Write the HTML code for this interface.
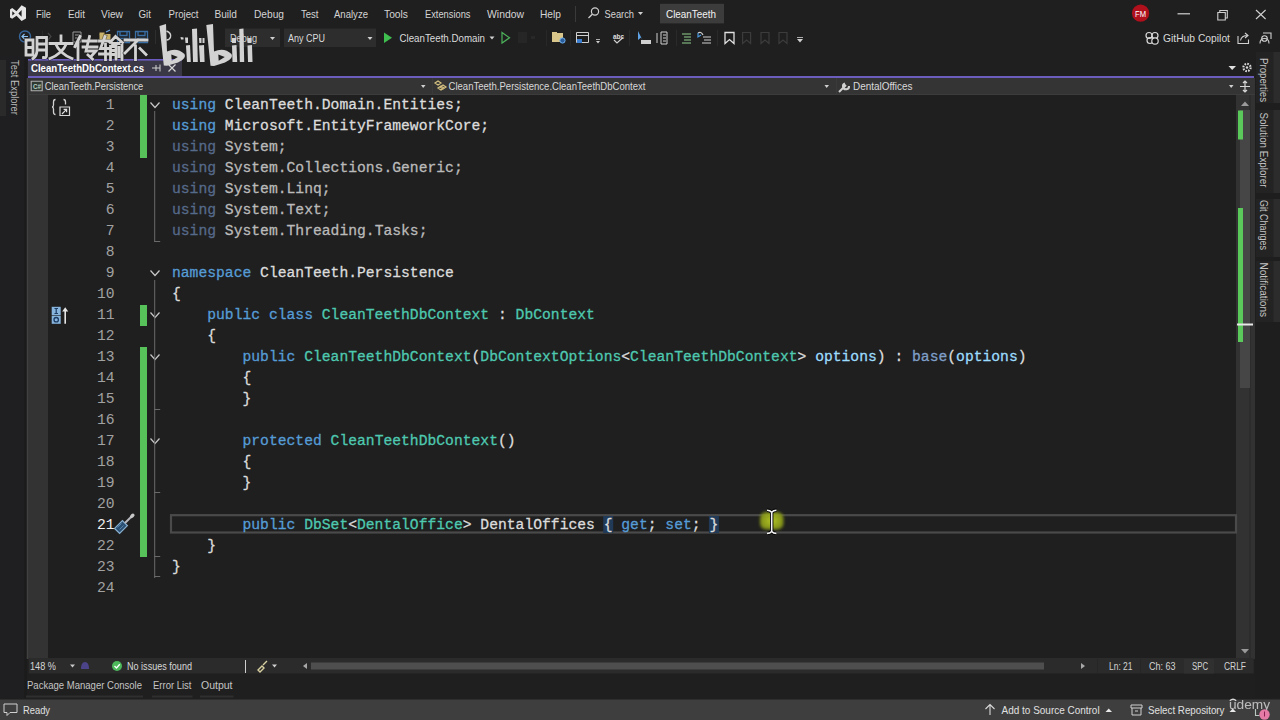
<!DOCTYPE html><html><head><meta charset="utf-8"><style>html,body{margin:0;padding:0;width:1280px;height:720px;overflow:hidden;background:#1f1f1f}</style></head><body><svg width="1280" height="720" viewBox="0 0 1280 720" style="display:block"><rect x="0" y="0" width="1280" height="720" fill="#1f1f1f" /><text x="36" y="17.8" font-family="Liberation Sans" font-size="11" fill="#d4d4d4" font-weight="400" text-anchor="start" textLength="15" lengthAdjust="spacingAndGlyphs" >File</text><text x="68" y="17.8" font-family="Liberation Sans" font-size="11" fill="#d4d4d4" font-weight="400" text-anchor="start" textLength="17" lengthAdjust="spacingAndGlyphs" >Edit</text><text x="101" y="17.8" font-family="Liberation Sans" font-size="11" fill="#d4d4d4" font-weight="400" text-anchor="start" textLength="22" lengthAdjust="spacingAndGlyphs" >View</text><text x="138.5" y="17.8" font-family="Liberation Sans" font-size="11" fill="#d4d4d4" font-weight="400" text-anchor="start" textLength="12.5" lengthAdjust="spacingAndGlyphs" >Git</text><text x="168.5" y="17.8" font-family="Liberation Sans" font-size="11" fill="#d4d4d4" font-weight="400" text-anchor="start" textLength="30" lengthAdjust="spacingAndGlyphs" >Project</text><text x="214.5" y="17.8" font-family="Liberation Sans" font-size="11" fill="#d4d4d4" font-weight="400" text-anchor="start" textLength="22.5" lengthAdjust="spacingAndGlyphs" >Build</text><text x="254" y="17.8" font-family="Liberation Sans" font-size="11" fill="#d4d4d4" font-weight="400" text-anchor="start" textLength="30" lengthAdjust="spacingAndGlyphs" >Debug</text><text x="301" y="17.8" font-family="Liberation Sans" font-size="11" fill="#d4d4d4" font-weight="400" text-anchor="start" textLength="17.5" lengthAdjust="spacingAndGlyphs" >Test</text><text x="334" y="17.8" font-family="Liberation Sans" font-size="11" fill="#d4d4d4" font-weight="400" text-anchor="start" textLength="34" lengthAdjust="spacingAndGlyphs" >Analyze</text><text x="384" y="17.8" font-family="Liberation Sans" font-size="11" fill="#d4d4d4" font-weight="400" text-anchor="start" textLength="24" lengthAdjust="spacingAndGlyphs" >Tools</text><text x="425" y="17.8" font-family="Liberation Sans" font-size="11" fill="#d4d4d4" font-weight="400" text-anchor="start" textLength="45.5" lengthAdjust="spacingAndGlyphs" >Extensions</text><text x="487" y="17.8" font-family="Liberation Sans" font-size="11" fill="#d4d4d4" font-weight="400" text-anchor="start" textLength="37" lengthAdjust="spacingAndGlyphs" >Window</text><text x="540" y="17.8" font-family="Liberation Sans" font-size="11" fill="#d4d4d4" font-weight="400" text-anchor="start" textLength="21" lengthAdjust="spacingAndGlyphs" >Help</text><path d="M10 9.5 L12.2 8 L16.5 11.2 L21.6 5.3 L26 7.8 V18.6 L21.6 21 L16.5 15.8 L12.2 18.8 L10 17.4 Z M12.3 11.3 L14.8 13.4 L12.3 15.5 Z M21.6 10 V16.8 L18.4 13.4 Z" stroke="none" fill="#e6e6e6" stroke-width="1" fill-rule="evenodd"/><rect x="575" y="6" width="1" height="16" fill="#3a3a3a" /><circle cx="595" cy="11.5" r="3.6" stroke="#d0d0d0" stroke-width="1.2" fill="none"/><path d="M592.3 14.3 L588.5 18" stroke="#d0d0d0" fill="none" stroke-width="1.3" /><text x="604.5" y="17.8" font-family="Liberation Sans" font-size="11" fill="#d4d4d4" font-weight="400" text-anchor="start" textLength="29.5" lengthAdjust="spacingAndGlyphs" >Search</text><path d="M638 12 L643 12 L640.5 15 Z" stroke="none" fill="#d0d0d0" stroke-width="1" /><rect x="660" y="3.8" width="64" height="19.6" fill="#3c3c3c" /><text x="666" y="17.8" font-family="Liberation Sans" font-size="11" fill="#f2f2f2" font-weight="400" text-anchor="start" textLength="50" lengthAdjust="spacingAndGlyphs" >CleanTeeth</text><circle cx="1140.6" cy="13.2" r="8.6" fill="#b0101c"/><text x="1140.6" y="16.6" font-family="Liberation Sans" font-size="8.5" fill="#ffffff" font-weight="400" text-anchor="middle" textLength="11" lengthAdjust="spacingAndGlyphs" >FM</text><rect x="1177.5" y="13.2" width="12.5" height="1.2" fill="#d0d0d0" /><path d="M1217.8 12.5 h7.5 v7.5 h-7.5 Z M1219.8 12.5 v-2 h7.5 v7.5 h-2" stroke="#d0d0d0" fill="none" stroke-width="1.1" /><path d="M1256 10 L1265.6 19 M1265.6 10 L1256 19" stroke="#d0d0d0" fill="none" stroke-width="1.1" /><rect x="225" y="28.5" width="55" height="18.5" fill="#2d2d2d" /><text x="230" y="41.5" font-family="Liberation Sans" font-size="11" fill="#cfcfcf" font-weight="400" text-anchor="start" textLength="27" lengthAdjust="spacingAndGlyphs" >Debug</text><path d="M270 37 L275 37 L272.5 40 Z" stroke="none" fill="#d0d0d0" stroke-width="1" /><rect x="284" y="28.5" width="92" height="18.5" fill="#2d2d2d" /><text x="288" y="41.5" font-family="Liberation Sans" font-size="11" fill="#dcdcdc" font-weight="400" text-anchor="start" textLength="37" lengthAdjust="spacingAndGlyphs" >Any CPU</text><path d="M367.5 37 L372.5 37 L370 40 Z" stroke="none" fill="#d0d0d0" stroke-width="1" /><path d="M384 32.5 L392 37.8 L384 43 Z" stroke="none" fill="#3fbf4f" stroke-width="1" /><text x="399.5" y="42" font-family="Liberation Sans" font-size="11" fill="#dadada" font-weight="400" text-anchor="start" textLength="85.5" lengthAdjust="spacingAndGlyphs" >CleanTeeth.Domain</text><path d="M489.5 36.5 L494.5 36.5 L492 39.5 Z" stroke="none" fill="#d0d0d0" stroke-width="1" /><path d="M502 32.5 L509.5 37.8 L502 43 Z" stroke="#4db35a" fill="none" stroke-width="1.2" /><rect x="518" y="32" width="9" height="11" fill="#262626" /><rect x="531" y="36" width="4" height="3" fill="#282828" /><rect x="546" y="30" width="1" height="16" fill="#282828" /><rect x="552" y="33" width="11" height="9" fill="#d8c68a" /><rect x="552" y="32" width="5" height="2" fill="#d8c68a" /><circle cx="562.5" cy="40.5" r="2.6" fill="#2a5d9a" stroke="#6fb0f0" stroke-width="1"/><rect x="570" y="30" width="1" height="16" fill="#282828" /><path d="M576.5 32.5 h12 v10 h-12 Z M576.5 35.5 h12" stroke="#cfcfcf" fill="none" stroke-width="1" /><rect x="577" y="39" width="5" height="4" fill="#3d7fd0" /><path d="M596 41 L600 41 L598 43.5 Z" stroke="none" fill="#d0d0d0" stroke-width="1" /><rect x="596" y="39" width="4" height="0.8" fill="#d0d0d0" /><text x="613" y="38.5" font-family="Liberation Sans" font-size="7.5" fill="#e0e0e0" font-weight="700" text-anchor="start" textLength="11" lengthAdjust="spacingAndGlyphs" >abc</text><path d="M614 40 L617 43 L623 37.5" stroke="#d0d0d0" fill="none" stroke-width="1.2" /><rect x="629" y="30" width="1" height="16" fill="#2a2a2a" /><path d="M638 31 L638 40 L641 37.5 L643 41 Z" stroke="none" fill="#5fa3e6" stroke-width="1" /><rect x="641" y="40" width="10" height="4" fill="#d0d0d0" /><path d="M657 33 v10 M661 32 h6 v12 h-6 Z M663 35 h3 M663 38 h3 M663 41 h3" stroke="#d0d0d0" fill="none" stroke-width="1" /><rect x="676" y="30" width="1" height="16" fill="#2a2a2a" /><path d="M682 34 h9 M684 37 h7 M684 40 h7 M682 43 h9" stroke="#8fcf8f" fill="none" stroke-width="1.2" /><path d="M698 33 q3 -2 5 2 M703 37 h8 M704 40 h7 M702 43 h9" stroke="#cfcfcf" fill="none" stroke-width="1.2" /><path d="M698 33 l0 4 l3 -2" stroke="#4a9ae0" fill="none" stroke-width="1.2" /><rect x="717" y="30" width="1" height="16" fill="#2a2a2a" /><path d="M725 32.5 v11 l4.5 -4 l4.5 4 v-11 Z" stroke="#e0e0e0" fill="none" stroke-width="1.3" /><path d="M742.6 32.5 v11 l4 -3.5 l4 3.5 v-11 Z" stroke="#3c3c3c" fill="none" stroke-width="1.2" /><path d="M761 32.5 v11 l4 -3.5 l4 3.5 v-11 Z" stroke="#3c3c3c" fill="none" stroke-width="1.2" /><path d="M779 32.5 v11 l4 -3.5 l4 3.5 v-11 Z" stroke="#3c3c3c" fill="none" stroke-width="1.2" /><path d="M797 39 L803 39 L800 42.5 Z" stroke="none" fill="#cfcfcf" stroke-width="1" /><rect x="797" y="37" width="6" height="0.8" fill="#cfcfcf" /><g stroke="#d8d8d8" stroke-width="1.2" fill="none"><circle cx="1149" cy="35.5" r="3"/><circle cx="1155" cy="35.5" r="3"/><circle cx="1150" cy="40.5" r="3"/></g><circle cx="1155" cy="41" r="3.2" fill="#111" stroke="#d8d8d8" stroke-width="1.2"/><text x="1163" y="42" font-family="Liberation Sans" font-size="11" fill="#d8d8d8" font-weight="400" text-anchor="start" textLength="67" lengthAdjust="spacingAndGlyphs" >GitHub Copilot</text><path d="M1238 36 v7.5 h10.5 v-4 M1240.5 40.5 q1 -5 7 -5 M1245 33 l3 2.5 l-3 2.5" stroke="#d0d0d0" fill="none" stroke-width="1.1" /><path d="M1260 43.5 q0 -5 4.5 -5 q4.5 0 4.5 5 M1264.5 38.5 m-2.8 0 a2.8 2.8 0 1 0 5.6 0 a2.8 2.8 0 1 0 -5.6 0 M1263 33 h8 v6" stroke="#d0d0d0" fill="none" stroke-width="1.1" /><rect x="0" y="55" width="24.5" height="643" fill="#1f1f21" /><rect x="24.5" y="55" width="2.2" height="643" fill="#1b1b1b" /><rect x="26.7" y="78" width="2" height="581" fill="#414141" /><rect x="1255" y="55" width="25" height="643" fill="#1e1e1e" /><rect x="1256" y="52" width="24" height="51" fill="#232323" /><rect x="1273.5" y="52" width="6.5" height="51" fill="#2c2c2c" /><rect x="1256" y="110" width="24" height="83" fill="#232323" /><rect x="1273.5" y="110" width="6.5" height="83" fill="#2c2c2c" /><rect x="1256" y="199" width="24" height="58" fill="#232323" /><rect x="1273.5" y="199" width="6.5" height="58" fill="#2c2c2c" /><rect x="1256" y="261" width="24" height="61" fill="#232323" /><rect x="1273.5" y="261" width="6.5" height="61" fill="#2c2c2c" /><rect x="0" y="60" width="6" height="56" fill="#2a2a2a" /><text transform="translate(10.5,60) rotate(90)" font-family="Liberation Sans" font-size="11" fill="#bdbdbd" textLength="55" lengthAdjust="spacingAndGlyphs">Test Explorer</text><text transform="translate(1260,58) rotate(90)" font-family="Liberation Sans" font-size="11" fill="#c4c4c4" textLength="44" lengthAdjust="spacingAndGlyphs">Properties</text><text transform="translate(1260,112.5) rotate(90)" font-family="Liberation Sans" font-size="11" fill="#c4c4c4" textLength="75" lengthAdjust="spacingAndGlyphs">Solution Explorer</text><text transform="translate(1260,200) rotate(90)" font-family="Liberation Sans" font-size="11" fill="#c4c4c4" textLength="50" lengthAdjust="spacingAndGlyphs">Git Changes</text><text transform="translate(1260,262.5) rotate(90)" font-family="Liberation Sans" font-size="11" fill="#c4c4c4" textLength="54.5" lengthAdjust="spacingAndGlyphs">Notifications</text><rect x="28" y="59" width="154" height="17" fill="#3a3846" /><rect x="28" y="59" width="154" height="1.6" fill="#6a5cc0" /><text x="31" y="72" font-family="Liberation Sans" font-size="11" fill="#ffffff" font-weight="700" text-anchor="start" textLength="113" lengthAdjust="spacingAndGlyphs" >CleanTeethDbContext.cs</text><path d="M152 68 h8 M156 65 v6 M160 64.5 v7" stroke="#d0d0d0" fill="none" stroke-width="1" /><path d="M168.5 64.5 L175.5 71.5 M175.5 64.5 L168.5 71.5" stroke="#d8d8d8" fill="none" stroke-width="1.2" /><rect x="28" y="76" width="1226" height="2" fill="#6a5dbc" /><path d="M1228.5 66 L1236 66 L1232.2 70 Z" stroke="none" fill="#e0e0e0" stroke-width="1" /><circle cx="1247" cy="67.5" r="3.6" fill="none" stroke="#d8d8d8" stroke-width="2.2" stroke-dasharray="1.6 1.2"/><circle cx="1247" cy="67.5" r="1.2" fill="#d8d8d8"/><rect x="28.7" y="78" width="1226.3" height="17" fill="#343434" /><rect x="28.7" y="94" width="1226.3" height="1" fill="#3c3c3c" /><rect x="432" y="78" width="1" height="17" fill="#3a3a3a" /><rect x="836" y="78" width="1" height="17" fill="#3a3a3a" /><path d="M31.2 81.2 h11 v9.6 h-11 Z" stroke="#b0b0b0" fill="#2f3a33" stroke-width="1.1" /><text x="33" y="89.3" font-family="Liberation Sans" font-size="7" fill="#b8d0c0" font-weight="700" text-anchor="start" textLength="8" lengthAdjust="spacingAndGlyphs" >C#</text><text x="44.8" y="90.2" font-family="Liberation Sans" font-size="11" fill="#d8d8d8" font-weight="400" text-anchor="start" textLength="98.5" lengthAdjust="spacingAndGlyphs" >CleanTeeth.Persistence</text><path d="M421 85 L425.5 85 L423.2 88 Z" stroke="none" fill="#d0d0d0" stroke-width="1" /><path d="M435 83 l3 -2 l3 2 l-3 2 Z M440 87 l3 -2 l3 2 l-3 2 Z M438 88 l3 -2 l3 2 l-3 2 Z" stroke="#d4c080" fill="none" stroke-width="1.2" /><text x="448.5" y="90.2" font-family="Liberation Sans" font-size="11" fill="#d8d8d8" font-weight="400" text-anchor="start" textLength="197" lengthAdjust="spacingAndGlyphs" >CleanTeeth.Persistence.CleanTeethDbContext</text><path d="M824.5 85 L829 85 L826.7 88 Z" stroke="none" fill="#d0d0d0" stroke-width="1" /><path d="M839 92 L846 85 M845 83.5 a3 3 0 1 0 4 2.5" stroke="#d0d0d0" fill="none" stroke-width="2" /><text x="853" y="90.2" font-family="Liberation Sans" font-size="11" fill="#dadada" font-weight="400" text-anchor="start" textLength="59.5" lengthAdjust="spacingAndGlyphs" >DentalOffices</text><path d="M1229 85 L1233.5 85 L1231.2 88 Z" stroke="none" fill="#d0d0d0" stroke-width="1" /><path d="M1240 86.5 h10 M1245 81 v11 M1243 83 l2 -2 l2 2 M1243 90 l2 2 l2 -2" stroke="#d8d8d8" fill="none" stroke-width="1.2" /><rect x="28.7" y="95" width="19.3" height="564" fill="#333333" /><rect x="48" y="95" width="1188" height="564" fill="#1f1f1f" /><rect x="1236" y="95" width="19" height="564" fill="#323232" /><rect x="1249.4" y="95" width="1.2" height="564" fill="#2a2a2a" /><rect x="1240" y="110" width="10" height="278" fill="#464646" /><path d="M1241 106 L1249 106 L1245 101.5 Z" stroke="none" fill="#9a9a9a" stroke-width="1" /><path d="M1241 649 L1249 649 L1245 653.5 Z" stroke="none" fill="#9a9a9a" stroke-width="1" /><rect x="1238" y="110.5" width="5" height="29" fill="#5bc85b" /><rect x="1238" y="208" width="5" height="134" fill="#5bc85b" /><rect x="1237" y="323.5" width="16" height="2" fill="#e8e8e8" /><rect x="140" y="95" width="7" height="63" fill="#57c25a" /><rect x="140" y="305" width="7" height="21" fill="#57c25a" /><rect x="140" y="347" width="7" height="210" fill="#57c25a" /><text x="114.5" y="109.3" font-family="Liberation Mono" font-size="15.5" fill="#a2a2a2" font-weight="400" text-anchor="end" textLength="8.81" lengthAdjust="spacingAndGlyphs" >1</text><text x="114.5" y="130.3" font-family="Liberation Mono" font-size="15.5" fill="#a2a2a2" font-weight="400" text-anchor="end" textLength="8.81" lengthAdjust="spacingAndGlyphs" >2</text><text x="114.5" y="151.3" font-family="Liberation Mono" font-size="15.5" fill="#a2a2a2" font-weight="400" text-anchor="end" textLength="8.81" lengthAdjust="spacingAndGlyphs" >3</text><text x="114.5" y="172.3" font-family="Liberation Mono" font-size="15.5" fill="#a2a2a2" font-weight="400" text-anchor="end" textLength="8.81" lengthAdjust="spacingAndGlyphs" >4</text><text x="114.5" y="193.3" font-family="Liberation Mono" font-size="15.5" fill="#a2a2a2" font-weight="400" text-anchor="end" textLength="8.81" lengthAdjust="spacingAndGlyphs" >5</text><text x="114.5" y="214.3" font-family="Liberation Mono" font-size="15.5" fill="#a2a2a2" font-weight="400" text-anchor="end" textLength="8.81" lengthAdjust="spacingAndGlyphs" >6</text><text x="114.5" y="235.3" font-family="Liberation Mono" font-size="15.5" fill="#a2a2a2" font-weight="400" text-anchor="end" textLength="8.81" lengthAdjust="spacingAndGlyphs" >7</text><text x="114.5" y="256.3" font-family="Liberation Mono" font-size="15.5" fill="#a2a2a2" font-weight="400" text-anchor="end" textLength="8.81" lengthAdjust="spacingAndGlyphs" >8</text><text x="114.5" y="277.3" font-family="Liberation Mono" font-size="15.5" fill="#a2a2a2" font-weight="400" text-anchor="end" textLength="8.81" lengthAdjust="spacingAndGlyphs" >9</text><text x="114.5" y="298.3" font-family="Liberation Mono" font-size="15.5" fill="#a2a2a2" font-weight="400" text-anchor="end" textLength="17.62" lengthAdjust="spacingAndGlyphs" >10</text><text x="114.5" y="319.3" font-family="Liberation Mono" font-size="15.5" fill="#a2a2a2" font-weight="400" text-anchor="end" textLength="17.62" lengthAdjust="spacingAndGlyphs" >11</text><text x="114.5" y="340.3" font-family="Liberation Mono" font-size="15.5" fill="#a2a2a2" font-weight="400" text-anchor="end" textLength="17.62" lengthAdjust="spacingAndGlyphs" >12</text><text x="114.5" y="361.3" font-family="Liberation Mono" font-size="15.5" fill="#a2a2a2" font-weight="400" text-anchor="end" textLength="17.62" lengthAdjust="spacingAndGlyphs" >13</text><text x="114.5" y="382.3" font-family="Liberation Mono" font-size="15.5" fill="#a2a2a2" font-weight="400" text-anchor="end" textLength="17.62" lengthAdjust="spacingAndGlyphs" >14</text><text x="114.5" y="403.3" font-family="Liberation Mono" font-size="15.5" fill="#a2a2a2" font-weight="400" text-anchor="end" textLength="17.62" lengthAdjust="spacingAndGlyphs" >15</text><text x="114.5" y="424.3" font-family="Liberation Mono" font-size="15.5" fill="#a2a2a2" font-weight="400" text-anchor="end" textLength="17.62" lengthAdjust="spacingAndGlyphs" >16</text><text x="114.5" y="445.3" font-family="Liberation Mono" font-size="15.5" fill="#a2a2a2" font-weight="400" text-anchor="end" textLength="17.62" lengthAdjust="spacingAndGlyphs" >17</text><text x="114.5" y="466.3" font-family="Liberation Mono" font-size="15.5" fill="#a2a2a2" font-weight="400" text-anchor="end" textLength="17.62" lengthAdjust="spacingAndGlyphs" >18</text><text x="114.5" y="487.3" font-family="Liberation Mono" font-size="15.5" fill="#a2a2a2" font-weight="400" text-anchor="end" textLength="17.62" lengthAdjust="spacingAndGlyphs" >19</text><text x="114.5" y="508.3" font-family="Liberation Mono" font-size="15.5" fill="#a2a2a2" font-weight="400" text-anchor="end" textLength="17.62" lengthAdjust="spacingAndGlyphs" >20</text><text x="114.5" y="529.3" font-family="Liberation Mono" font-size="15.5" fill="#f0f0f0" font-weight="400" text-anchor="end" textLength="17.62" lengthAdjust="spacingAndGlyphs" >21</text><text x="114.5" y="550.3" font-family="Liberation Mono" font-size="15.5" fill="#a2a2a2" font-weight="400" text-anchor="end" textLength="17.62" lengthAdjust="spacingAndGlyphs" >22</text><text x="114.5" y="571.3" font-family="Liberation Mono" font-size="15.5" fill="#a2a2a2" font-weight="400" text-anchor="end" textLength="17.62" lengthAdjust="spacingAndGlyphs" >23</text><text x="114.5" y="592.3" font-family="Liberation Mono" font-size="15.5" fill="#a2a2a2" font-weight="400" text-anchor="end" textLength="17.62" lengthAdjust="spacingAndGlyphs" >24</text><path d="M150.5 102.5 L155 107.5 L159.5 102.5" stroke="#c8c8c8" fill="none" stroke-width="1.2" /><path d="M150.5 270.5 L155 275.5 L159.5 270.5" stroke="#c8c8c8" fill="none" stroke-width="1.2" /><path d="M150.5 312.5 L155 317.5 L159.5 312.5" stroke="#c8c8c8" fill="none" stroke-width="1.2" /><path d="M150.5 354.5 L155 359.5 L159.5 354.5" stroke="#c8c8c8" fill="none" stroke-width="1.2" /><path d="M150.5 438.5 L155 443.5 L159.5 438.5" stroke="#c8c8c8" fill="none" stroke-width="1.2" /><rect x="154.2" y="111" width="1" height="131" fill="#6a6a6a" /><rect x="154.2" y="241" width="6" height="1" fill="#6a6a6a" /><rect x="154.2" y="280" width="1" height="298" fill="#6a6a6a" /><rect x="154.2" y="576" width="6" height="1" fill="#6a6a6a" /><rect x="154.2" y="556" width="6" height="1" fill="#6a6a6a" /><rect x="154.2" y="492" width="6" height="1" fill="#6a6a6a" /><rect x="154.2" y="409" width="6" height="1" fill="#6a6a6a" /><rect x="171" y="515.2" width="1065" height="17.3" fill="none" stroke="#4a4a4a" stroke-width="2.2"/><rect x="603.19" y="516" width="10" height="17" fill="#213a58" /><rect x="708.91" y="516" width="10" height="17" fill="#213a58" /><text x="172.0" y="109.3" font-family="Liberation Mono" font-size="15.5" fill="#569cd6" font-weight="400" text-anchor="start" textLength="44.05" lengthAdjust="spacingAndGlyphs" stroke="#569cd6" stroke-width="0.3">using</text><text x="224.86" y="109.3" font-family="Liberation Mono" font-size="15.5" fill="#dcdcdc" font-weight="400" text-anchor="start" textLength="237.87" lengthAdjust="spacingAndGlyphs" stroke="#dcdcdc" stroke-width="0.3">CleanTeeth.Domain.Entities;</text><text x="172.0" y="130.3" font-family="Liberation Mono" font-size="15.5" fill="#569cd6" font-weight="400" text-anchor="start" textLength="44.05" lengthAdjust="spacingAndGlyphs" stroke="#569cd6" stroke-width="0.3">using</text><text x="224.86" y="130.3" font-family="Liberation Mono" font-size="15.5" fill="#dcdcdc" font-weight="400" text-anchor="start" textLength="264.3" lengthAdjust="spacingAndGlyphs" stroke="#dcdcdc" stroke-width="0.3">Microsoft.EntityFrameworkCore;</text><text x="172.0" y="151.3" font-family="Liberation Mono" font-size="15.5" fill="#566a8a" font-weight="400" text-anchor="start" textLength="44.05" lengthAdjust="spacingAndGlyphs" stroke="#566a8a" stroke-width="0.3">using</text><text x="224.86" y="151.3" font-family="Liberation Mono" font-size="15.5" fill="#bababa" font-weight="400" text-anchor="start" textLength="61.67" lengthAdjust="spacingAndGlyphs" stroke="#bababa" stroke-width="0.3">System;</text><text x="172.0" y="172.3" font-family="Liberation Mono" font-size="15.5" fill="#566a8a" font-weight="400" text-anchor="start" textLength="44.05" lengthAdjust="spacingAndGlyphs" stroke="#566a8a" stroke-width="0.3">using</text><text x="224.86" y="172.3" font-family="Liberation Mono" font-size="15.5" fill="#bababa" font-weight="400" text-anchor="start" textLength="237.87" lengthAdjust="spacingAndGlyphs" stroke="#bababa" stroke-width="0.3">System.Collections.Generic;</text><text x="172.0" y="193.3" font-family="Liberation Mono" font-size="15.5" fill="#566a8a" font-weight="400" text-anchor="start" textLength="44.05" lengthAdjust="spacingAndGlyphs" stroke="#566a8a" stroke-width="0.3">using</text><text x="224.86" y="193.3" font-family="Liberation Mono" font-size="15.5" fill="#bababa" font-weight="400" text-anchor="start" textLength="105.72" lengthAdjust="spacingAndGlyphs" stroke="#bababa" stroke-width="0.3">System.Linq;</text><text x="172.0" y="214.3" font-family="Liberation Mono" font-size="15.5" fill="#566a8a" font-weight="400" text-anchor="start" textLength="44.05" lengthAdjust="spacingAndGlyphs" stroke="#566a8a" stroke-width="0.3">using</text><text x="224.86" y="214.3" font-family="Liberation Mono" font-size="15.5" fill="#bababa" font-weight="400" text-anchor="start" textLength="105.72" lengthAdjust="spacingAndGlyphs" stroke="#bababa" stroke-width="0.3">System.Text;</text><text x="172.0" y="235.3" font-family="Liberation Mono" font-size="15.5" fill="#566a8a" font-weight="400" text-anchor="start" textLength="44.05" lengthAdjust="spacingAndGlyphs" stroke="#566a8a" stroke-width="0.3">using</text><text x="224.86" y="235.3" font-family="Liberation Mono" font-size="15.5" fill="#bababa" font-weight="400" text-anchor="start" textLength="202.63" lengthAdjust="spacingAndGlyphs" stroke="#bababa" stroke-width="0.3">System.Threading.Tasks;</text><text x="172.0" y="277.3" font-family="Liberation Mono" font-size="15.5" fill="#569cd6" font-weight="400" text-anchor="start" textLength="79.29" lengthAdjust="spacingAndGlyphs" stroke="#569cd6" stroke-width="0.3">namespace</text><text x="260.1" y="277.3" font-family="Liberation Mono" font-size="15.5" fill="#dcdcdc" font-weight="400" text-anchor="start" textLength="193.82" lengthAdjust="spacingAndGlyphs" stroke="#dcdcdc" stroke-width="0.3">CleanTeeth.Persistence</text><text x="172.0" y="298.3" font-family="Liberation Mono" font-size="15.5" fill="#dcdcdc" font-weight="400" text-anchor="start" textLength="8.81" lengthAdjust="spacingAndGlyphs" stroke="#dcdcdc" stroke-width="0.3">{</text><text x="207.24" y="319.3" font-family="Liberation Mono" font-size="15.5" fill="#569cd6" font-weight="400" text-anchor="start" textLength="52.86" lengthAdjust="spacingAndGlyphs" stroke="#569cd6" stroke-width="0.3">public</text><text x="268.91" y="319.3" font-family="Liberation Mono" font-size="15.5" fill="#569cd6" font-weight="400" text-anchor="start" textLength="44.05" lengthAdjust="spacingAndGlyphs" stroke="#569cd6" stroke-width="0.3">class</text><text x="321.77" y="319.3" font-family="Liberation Mono" font-size="15.5" fill="#4ec9b0" font-weight="400" text-anchor="start" textLength="167.39" lengthAdjust="spacingAndGlyphs" stroke="#4ec9b0" stroke-width="0.3">CleanTeethDbContext</text><text x="497.97" y="319.3" font-family="Liberation Mono" font-size="15.5" fill="#dcdcdc" font-weight="400" text-anchor="start" textLength="8.81" lengthAdjust="spacingAndGlyphs" stroke="#dcdcdc" stroke-width="0.3">:</text><text x="515.59" y="319.3" font-family="Liberation Mono" font-size="15.5" fill="#4ec9b0" font-weight="400" text-anchor="start" textLength="79.29" lengthAdjust="spacingAndGlyphs" stroke="#4ec9b0" stroke-width="0.3">DbContext</text><text x="207.24" y="340.3" font-family="Liberation Mono" font-size="15.5" fill="#dcdcdc" font-weight="400" text-anchor="start" textLength="8.81" lengthAdjust="spacingAndGlyphs" stroke="#dcdcdc" stroke-width="0.3">{</text><text x="242.48" y="361.3" font-family="Liberation Mono" font-size="15.5" fill="#569cd6" font-weight="400" text-anchor="start" textLength="52.86" lengthAdjust="spacingAndGlyphs" stroke="#569cd6" stroke-width="0.3">public</text><text x="304.15" y="361.3" font-family="Liberation Mono" font-size="15.5" fill="#4ec9b0" font-weight="400" text-anchor="start" textLength="167.39" lengthAdjust="spacingAndGlyphs" stroke="#4ec9b0" stroke-width="0.3">CleanTeethDbContext</text><text x="471.54" y="361.3" font-family="Liberation Mono" font-size="15.5" fill="#dcdcdc" font-weight="400" text-anchor="start" textLength="8.81" lengthAdjust="spacingAndGlyphs" stroke="#dcdcdc" stroke-width="0.3">(</text><text x="480.35" y="361.3" font-family="Liberation Mono" font-size="15.5" fill="#4ec9b0" font-weight="400" text-anchor="start" textLength="140.96" lengthAdjust="spacingAndGlyphs" stroke="#4ec9b0" stroke-width="0.3">DbContextOptions</text><text x="621.31" y="361.3" font-family="Liberation Mono" font-size="15.5" fill="#dcdcdc" font-weight="400" text-anchor="start" textLength="8.81" lengthAdjust="spacingAndGlyphs" stroke="#dcdcdc" stroke-width="0.3">&lt;</text><text x="630.12" y="361.3" font-family="Liberation Mono" font-size="15.5" fill="#4ec9b0" font-weight="400" text-anchor="start" textLength="167.39" lengthAdjust="spacingAndGlyphs" stroke="#4ec9b0" stroke-width="0.3">CleanTeethDbContext</text><text x="797.51" y="361.3" font-family="Liberation Mono" font-size="15.5" fill="#dcdcdc" font-weight="400" text-anchor="start" textLength="8.81" lengthAdjust="spacingAndGlyphs" stroke="#dcdcdc" stroke-width="0.3">&gt;</text><text x="815.13" y="361.3" font-family="Liberation Mono" font-size="15.5" fill="#9cdcfe" font-weight="400" text-anchor="start" textLength="61.67" lengthAdjust="spacingAndGlyphs" stroke="#9cdcfe" stroke-width="0.3">options</text><text x="876.8" y="361.3" font-family="Liberation Mono" font-size="15.5" fill="#dcdcdc" font-weight="400" text-anchor="start" textLength="8.81" lengthAdjust="spacingAndGlyphs" stroke="#dcdcdc" stroke-width="0.3">)</text><text x="894.42" y="361.3" font-family="Liberation Mono" font-size="15.5" fill="#dcdcdc" font-weight="400" text-anchor="start" textLength="8.81" lengthAdjust="spacingAndGlyphs" stroke="#dcdcdc" stroke-width="0.3">:</text><text x="912.04" y="361.3" font-family="Liberation Mono" font-size="15.5" fill="#7f9fc8" font-weight="400" text-anchor="start" textLength="35.24" lengthAdjust="spacingAndGlyphs" stroke="#7f9fc8" stroke-width="0.3">base</text><text x="947.28" y="361.3" font-family="Liberation Mono" font-size="15.5" fill="#dcdcdc" font-weight="400" text-anchor="start" textLength="8.81" lengthAdjust="spacingAndGlyphs" stroke="#dcdcdc" stroke-width="0.3">(</text><text x="956.09" y="361.3" font-family="Liberation Mono" font-size="15.5" fill="#9cdcfe" font-weight="400" text-anchor="start" textLength="61.67" lengthAdjust="spacingAndGlyphs" stroke="#9cdcfe" stroke-width="0.3">options</text><text x="1017.76" y="361.3" font-family="Liberation Mono" font-size="15.5" fill="#dcdcdc" font-weight="400" text-anchor="start" textLength="8.81" lengthAdjust="spacingAndGlyphs" stroke="#dcdcdc" stroke-width="0.3">)</text><text x="242.48" y="382.3" font-family="Liberation Mono" font-size="15.5" fill="#dcdcdc" font-weight="400" text-anchor="start" textLength="8.81" lengthAdjust="spacingAndGlyphs" stroke="#dcdcdc" stroke-width="0.3">{</text><text x="242.48" y="403.3" font-family="Liberation Mono" font-size="15.5" fill="#dcdcdc" font-weight="400" text-anchor="start" textLength="8.81" lengthAdjust="spacingAndGlyphs" stroke="#dcdcdc" stroke-width="0.3">}</text><text x="242.48" y="445.3" font-family="Liberation Mono" font-size="15.5" fill="#569cd6" font-weight="400" text-anchor="start" textLength="79.29" lengthAdjust="spacingAndGlyphs" stroke="#569cd6" stroke-width="0.3">protected</text><text x="330.58" y="445.3" font-family="Liberation Mono" font-size="15.5" fill="#4ec9b0" font-weight="400" text-anchor="start" textLength="167.39" lengthAdjust="spacingAndGlyphs" stroke="#4ec9b0" stroke-width="0.3">CleanTeethDbContext</text><text x="497.97" y="445.3" font-family="Liberation Mono" font-size="15.5" fill="#dcdcdc" font-weight="400" text-anchor="start" textLength="17.62" lengthAdjust="spacingAndGlyphs" stroke="#dcdcdc" stroke-width="0.3">()</text><text x="242.48" y="466.3" font-family="Liberation Mono" font-size="15.5" fill="#dcdcdc" font-weight="400" text-anchor="start" textLength="8.81" lengthAdjust="spacingAndGlyphs" stroke="#dcdcdc" stroke-width="0.3">{</text><text x="242.48" y="487.3" font-family="Liberation Mono" font-size="15.5" fill="#dcdcdc" font-weight="400" text-anchor="start" textLength="8.81" lengthAdjust="spacingAndGlyphs" stroke="#dcdcdc" stroke-width="0.3">}</text><text x="242.48" y="529.3" font-family="Liberation Mono" font-size="15.5" fill="#569cd6" font-weight="400" text-anchor="start" textLength="52.86" lengthAdjust="spacingAndGlyphs" stroke="#569cd6" stroke-width="0.3">public</text><text x="304.15" y="529.3" font-family="Liberation Mono" font-size="15.5" fill="#4ec9b0" font-weight="400" text-anchor="start" textLength="44.05" lengthAdjust="spacingAndGlyphs" stroke="#4ec9b0" stroke-width="0.3">DbSet</text><text x="348.2" y="529.3" font-family="Liberation Mono" font-size="15.5" fill="#dcdcdc" font-weight="400" text-anchor="start" textLength="8.81" lengthAdjust="spacingAndGlyphs" stroke="#dcdcdc" stroke-width="0.3">&lt;</text><text x="357.01" y="529.3" font-family="Liberation Mono" font-size="15.5" fill="#4ec9b0" font-weight="400" text-anchor="start" textLength="105.72" lengthAdjust="spacingAndGlyphs" stroke="#4ec9b0" stroke-width="0.3">DentalOffice</text><text x="462.73" y="529.3" font-family="Liberation Mono" font-size="15.5" fill="#dcdcdc" font-weight="400" text-anchor="start" textLength="8.81" lengthAdjust="spacingAndGlyphs" stroke="#dcdcdc" stroke-width="0.3">&gt;</text><text x="480.35" y="529.3" font-family="Liberation Mono" font-size="15.5" fill="#dcdcdc" font-weight="400" text-anchor="start" textLength="114.53" lengthAdjust="spacingAndGlyphs" stroke="#dcdcdc" stroke-width="0.3">DentalOffices</text><text x="603.69" y="529.3" font-family="Liberation Mono" font-size="15.5" fill="#dcdcdc" font-weight="400" text-anchor="start" textLength="8.81" lengthAdjust="spacingAndGlyphs" stroke="#dcdcdc" stroke-width="0.3">{</text><text x="621.31" y="529.3" font-family="Liberation Mono" font-size="15.5" fill="#569cd6" font-weight="400" text-anchor="start" textLength="26.43" lengthAdjust="spacingAndGlyphs" stroke="#569cd6" stroke-width="0.3">get</text><text x="647.74" y="529.3" font-family="Liberation Mono" font-size="15.5" fill="#dcdcdc" font-weight="400" text-anchor="start" textLength="8.81" lengthAdjust="spacingAndGlyphs" stroke="#dcdcdc" stroke-width="0.3">;</text><text x="665.36" y="529.3" font-family="Liberation Mono" font-size="15.5" fill="#569cd6" font-weight="400" text-anchor="start" textLength="26.43" lengthAdjust="spacingAndGlyphs" stroke="#569cd6" stroke-width="0.3">set</text><text x="691.79" y="529.3" font-family="Liberation Mono" font-size="15.5" fill="#dcdcdc" font-weight="400" text-anchor="start" textLength="8.81" lengthAdjust="spacingAndGlyphs" stroke="#dcdcdc" stroke-width="0.3">;</text><text x="709.41" y="529.3" font-family="Liberation Mono" font-size="15.5" fill="#dcdcdc" font-weight="400" text-anchor="start" textLength="8.81" lengthAdjust="spacingAndGlyphs" stroke="#dcdcdc" stroke-width="0.3">}</text><text x="207.24" y="550.3" font-family="Liberation Mono" font-size="15.5" fill="#dcdcdc" font-weight="400" text-anchor="start" textLength="8.81" lengthAdjust="spacingAndGlyphs" stroke="#dcdcdc" stroke-width="0.3">}</text><text x="172.0" y="571.3" font-family="Liberation Mono" font-size="15.5" fill="#dcdcdc" font-weight="400" text-anchor="start" textLength="8.81" lengthAdjust="spacingAndGlyphs" stroke="#dcdcdc" stroke-width="0.3">}</text><path d="M55.5 99.5 q-2 0 -2 2.5 v3 q0 2 -1.5 2 q1.5 0 1.5 2 v3 q0 2.5 2 2.5 M63.5 99.5 q2 0 2 2.5 v2.5" stroke="#d0d0d0" fill="none" stroke-width="1.3" /><path d="M60 107 h9.5 v8.5 h-9.5 Z" stroke="#d8d8d8" fill="none" stroke-width="1.2" /><path d="M62 114 L66.5 109.3 M63.6 109.3 h3 v3" stroke="#e0e0e0" fill="none" stroke-width="1.2" /><rect x="51.7" y="306.8" width="9" height="8.2" fill="#86b4dc" /><rect x="51.7" y="315.6" width="9" height="8.2" fill="#86b4dc" /><path d="M54.5 308.5 h3.5 M56.2 308.5 v5 M54.5 313.5 h3.5" stroke="#1c3c64" fill="none" stroke-width="1.2" /><circle cx="56.2" cy="319.7" r="2.2" fill="none" stroke="#1c3c64" stroke-width="1.3"/><path d="M65.2 323.7 V309.5" stroke="#e6e6e6" fill="none" stroke-width="1.6" /><path d="M62.2 311.5 L65.2 307.3 L68.2 311.5 Z" stroke="none" fill="#e6e6e6" stroke-width="1" /><path d="M127.4 525.6 L122.4 520.6 L114.6 528.4 L119.6 533.4 Z" stroke="#8ab0d0" fill="#2a4f72" stroke-width="1.3" /><path d="M117.5 527.5 l4 -4 M119.5 529.5 l4 -4" stroke="#5f8fb8" fill="none" stroke-width="0.8" /><path d="M125 523 L131.5 516.5" stroke="#b8b8c0" fill="none" stroke-width="2" /><ellipse cx="132.3" cy="515.8" rx="2.6" ry="1.8" transform="rotate(-45 132.3 515.8)" fill="#c8c8c8"/><defs><filter id="gb" x="-50%" y="-50%" width="200%" height="200%"><feGaussianBlur stdDeviation="1.6"/></filter><radialGradient id="glow" cx="0.5" cy="0.5" r="0.6"><stop offset="0" stop-color="#c4d826"/><stop offset="1" stop-color="#7e8e16"/></radialGradient></defs><rect x="760" y="512" width="23.5" height="17.5" rx="6" fill="url(#glow)" opacity="0.9" filter="url(#gb)"/><path d="M767 510.3 q3 0 4.7 2 q1.7 -2 4.7 -2 M767 533.4 q3 0 4.7 -2 q1.7 2 4.7 2 M771.7 512 V531.7" stroke="#000000" fill="none" stroke-width="3.4" /><path d="M767 510.3 q3 0 4.7 2 q1.7 -2 4.7 -2 M767 533.4 q3 0 4.7 -2 q1.7 2 4.7 2 M771.7 512 V531.7" stroke="#f4f4f4" fill="none" stroke-width="1.6" /><rect x="28.7" y="658" width="1225" height="15.5" fill="#2b2b2b" /><text x="30" y="669.6" font-family="Liberation Sans" font-size="10" fill="#d4d4d4" font-weight="400" text-anchor="start" textLength="26" lengthAdjust="spacingAndGlyphs" >148 %</text><path d="M70 664.5 L75 664.5 L72.5 667.5 Z" stroke="none" fill="#c8c8c8" stroke-width="1" /><path d="M81 669 q0 -7 4 -7 q4 0 4 7 Z" stroke="none" fill="#4c4488" stroke-width="1" /><circle cx="117" cy="666" r="5" fill="#4cb85a"/><path d="M114.5 666 L116.5 668 L119.8 664.3" stroke="#ffffff" fill="none" stroke-width="1.3" /><text x="127" y="669.8" font-family="Liberation Sans" font-size="10" fill="#d8d8d8" font-weight="400" text-anchor="start" textLength="65" lengthAdjust="spacingAndGlyphs" >No issues found</text><rect x="245" y="660" width="1" height="13" fill="#cfcfcf" /><path d="M258 670 l4 -4 l2 2 l-4 4 Z M263 665 l4 -4" stroke="#d8d0a0" fill="none" stroke-width="1.4" /><path d="M272 664.5 L277 664.5 L274.5 667.5 Z" stroke="none" fill="#d0d0d0" stroke-width="1" /><path d="M303 666 L307 663 V669 Z" stroke="none" fill="#a8a8a8" stroke-width="1" /><rect x="311" y="662.5" width="733" height="7" fill="#4e4e4e" /><path d="M1081 663 L1085 666 L1081 669 Z" stroke="none" fill="#a8a8a8" stroke-width="1" /><rect x="1097" y="659" width="1" height="14" fill="#262626" /><rect x="1140" y="659" width="1" height="14" fill="#262626" /><rect x="1184" y="659" width="30" height="14.5" fill="#303030" /><text x="1109" y="669.6" font-family="Liberation Sans" font-size="10" fill="#d4d4d4" font-weight="400" text-anchor="start" textLength="23.5" lengthAdjust="spacingAndGlyphs" >Ln: 21</text><text x="1149" y="669.6" font-family="Liberation Sans" font-size="10" fill="#d4d4d4" font-weight="400" text-anchor="start" textLength="26.5" lengthAdjust="spacingAndGlyphs" >Ch: 63</text><text x="1192" y="669.6" font-family="Liberation Sans" font-size="10" fill="#d4d4d4" font-weight="400" text-anchor="start" textLength="16" lengthAdjust="spacingAndGlyphs" >SPC</text><text x="1224" y="669.6" font-family="Liberation Sans" font-size="10" fill="#d4d4d4" font-weight="400" text-anchor="start" textLength="22" lengthAdjust="spacingAndGlyphs" >CRLF</text><text x="27" y="689.3" font-family="Liberation Sans" font-size="11" fill="#c4c4c4" font-weight="400" text-anchor="start" textLength="115" lengthAdjust="spacingAndGlyphs" >Package Manager Console</text><rect x="26" y="695.5" width="117" height="2" fill="#2f2f2f" /><text x="153" y="689.3" font-family="Liberation Sans" font-size="11" fill="#c4c4c4" font-weight="400" text-anchor="start" textLength="38.5" lengthAdjust="spacingAndGlyphs" >Error List</text><rect x="152" y="695.5" width="40.5" height="2" fill="#2f2f2f" /><text x="201" y="689.3" font-family="Liberation Sans" font-size="11" fill="#c4c4c4" font-weight="400" text-anchor="start" textLength="31.5" lengthAdjust="spacingAndGlyphs" >Output</text><rect x="200" y="695.5" width="33.5" height="2" fill="#2f2f2f" /><rect x="0" y="699.5" width="1280" height="20.5" fill="#3e3e3e" /><path d="M4 704 h13 v8.5 h-7 l-3 3 v-3 h-3 Z" stroke="#d0d0d0" fill="none" stroke-width="1" /><text x="23" y="714" font-family="Liberation Sans" font-size="11" fill="#e0e0e0" font-weight="400" text-anchor="start" textLength="27" lengthAdjust="spacingAndGlyphs" >Ready</text><path d="M990 715 V704.5 M985.5 709 L990 704.5 L994.5 709" stroke="#d8d8d8" fill="none" stroke-width="1.1" /><text x="1001.6" y="714" font-family="Liberation Sans" font-size="11" fill="#e0e0e0" font-weight="400" text-anchor="start" textLength="98" lengthAdjust="spacingAndGlyphs" >Add to Source Control</text><path d="M1105.5 712 L1112 712 L1108.75 708.5 Z" stroke="none" fill="#e8e8e8" stroke-width="1" /><path d="M1131 705 h11 v3 h-11 Z M1132 708 v7 h9 v-7 M1135 711 h3" stroke="#d0d0d0" fill="none" stroke-width="1" /><text x="1148" y="714" font-family="Liberation Sans" font-size="11" fill="#e0e0e0" font-weight="400" text-anchor="start" textLength="76.5" lengthAdjust="spacingAndGlyphs" >Select Repository</text><path d="M1229.5 712 L1236 712 L1232.75 708.5 Z" stroke="none" fill="#e8e8e8" stroke-width="1" /><text x="1229" y="708.5" font-family="Liberation Sans" font-size="13" fill="#e6e6e6" font-weight="400" text-anchor="start" textLength="41" lengthAdjust="spacingAndGlyphs" opacity="0.75">udemy</text><path d="M1229.8 700.8 q3.2 -3.2 6.4 0" stroke="#d8d8d8" fill="none" stroke-width="1.3" /><path d="M1255.5 709 v6.5 h4" stroke="#b8c8c0" fill="none" stroke-width="1.1" /><circle cx="1264.5" cy="714.5" r="5.2" fill="#e47aa6"/><path d="M1264.5 711.5 v5" stroke="#8a2050" fill="none" stroke-width="1" /><circle cx="25" cy="36.5" r="5.5" fill="none" stroke="#37679c" stroke-width="1.4"/><path d="M28 36.5 h-6 M24.5 34 l-2.5 2.5 l2.5 2.5" stroke="#8cc0f0" fill="none" stroke-width="1.2" /><rect x="42" y="31" width="1" height="12" fill="#2a2a2a" /><path d="M48 33 l3 3.5 l-3 3.5" stroke="#444" fill="none" stroke-width="1.2" /><path d="M73 32 h8 v10 h-8 Z M75 35 h4 M75 38 h4" stroke="#9a9a9a" fill="none" stroke-width="1" /><rect x="99.5" y="34" width="11" height="8" fill="#c9b36a" /><rect x="99.5" y="32.5" width="5" height="2" fill="#c9b36a" /><path d="M106 32 l4 -2" stroke="#6aa0e0" fill="none" stroke-width="1.2" /><path d="M117.5 31.5 h12 v11 h-12 Z M120 31.5 v4 h7 v-4 M120 42.5 v-4 h7 v4" stroke="#3a6fa6" fill="none" stroke-width="1.3" /><path d="M135.5 31.5 h12 v11 h-12 Z M138 31.5 v4 h7 v-4 M138 42.5 v-4 h7 v4" stroke="#3a6fa6" fill="none" stroke-width="1.3" /><rect x="155" y="30" width="1" height="14" fill="#2e2e2e" /><path d="M1.5 4 h7 v15 h-7 Z M1.5 11.5 h7 M12.5 1.5 V14 q0 6 -4 8.5 M12.5 1.5 h9.5 V20 q0 2 -3 1.5 M12.5 8 h9.5 M12.5 14 h9.5" stroke="#1a1a1a" fill="none" stroke-width="4.2" transform="translate(24.5,36)" stroke-linecap="square" opacity="0.5"/><path d="M1.5 4 h7 v15 h-7 Z M1.5 11.5 h7 M12.5 1.5 V14 q0 6 -4 8.5 M12.5 1.5 h9.5 V20 q0 2 -3 1.5 M12.5 8 h9.5 M12.5 14 h9.5" stroke="#d2d2d2" fill="none" stroke-width="2.8" transform="translate(24.5,36)" stroke-linecap="square"/><path d="M12 0 v4.5 M1 7.5 h22 M6.5 7.5 q4 10 16.5 15 M17.5 7.5 q-4 10 -16.5 15" stroke="#1a1a1a" fill="none" stroke-width="4.2" transform="translate(49,36)" stroke-linecap="square" opacity="0.5"/><path d="M12 0 v4.5 M1 7.5 h22 M6.5 7.5 q4 10 16.5 15 M17.5 7.5 q-4 10 -16.5 15" stroke="#d2d2d2" fill="none" stroke-width="2.8" transform="translate(49,36)" stroke-linecap="square"/><path d="M6 0.5 l-5 10 M4 7 V23.5 M9 5 h14 M9 11 h14 M15.5 0.5 l-3.5 14.5 h10 l-5 5.5 M14 19 l4.5 4" stroke="#1a1a1a" fill="none" stroke-width="4.2" transform="translate(74,36)" stroke-linecap="square" opacity="0.5"/><path d="M6 0.5 l-5 10 M4 7 V23.5 M9 5 h14 M9 11 h14 M15.5 0.5 l-3.5 14.5 h10 l-5 5.5 M14 19 l4.5 4" stroke="#d2d2d2" fill="none" stroke-width="2.8" transform="translate(74,36)" stroke-linecap="square"/><path d="M0.5 5 h9.5 M6 0.5 l-4.5 12 h9 M0.5 18 h9.5 M6.5 8.5 V23.5 M16.5 0.5 l-5.5 6 M16.5 0.5 l7 6 M13.5 7.5 h6.5 M11.5 10.5 h5.5 v12.5 M11.5 10.5 V23.5 M14 14.5 h3 M14 18.5 h3 M20 11.5 v9 M23 9.5 V23.5" stroke="#1a1a1a" fill="none" stroke-width="4.2" transform="translate(99,36)" stroke-linecap="square" opacity="0.5"/><path d="M0.5 5 h9.5 M6 0.5 l-4.5 12 h9 M0.5 18 h9.5 M6.5 8.5 V23.5 M16.5 0.5 l-5.5 6 M16.5 0.5 l7 6 M13.5 7.5 h6.5 M11.5 10.5 h5.5 v12.5 M11.5 10.5 V23.5 M14 14.5 h3 M14 18.5 h3 M20 11.5 v9 M23 9.5 V23.5" stroke="#d2d2d2" fill="none" stroke-width="2.8" transform="translate(99,36)" stroke-linecap="square"/><path d="M1 4 h22 M14 4 l-13 13 M11.5 10 V23.5 M16 12.5 l6 6" stroke="#1a1a1a" fill="none" stroke-width="4.2" transform="translate(124,36)" stroke-linecap="square" opacity="0.5"/><path d="M1 4 h22 M14 4 l-13 13 M11.5 10 V23.5 M16 12.5 l6 6" stroke="#d2d2d2" fill="none" stroke-width="2.8" transform="translate(124,36)" stroke-linecap="square"/><path d="M159.5 26 L166 24 L167 51.5 Q177 47 184.5 54 Q187 58.5 178 62.5 L167 65.8 L163.8 65.5 Z M171.3 54.5 L177.8 57 L171.7 60.8 Z" stroke="none" fill="#d2d2d2" stroke-width="1" fill-rule="evenodd" stroke="#202020" stroke-opacity="0.5" stroke-width="0.8"/><path d="M166.5 31 q5 2 4 6 q-1 3 -4 3" stroke="#d2d2d2" fill="none" stroke-width="1.4" /><path d="M180.5 37 L183.5 37.5 L183.5 39.5 L181 39.5 Z" stroke="none" fill="#d2d2d2" stroke-width="1" fill-rule="evenodd" stroke="#202020" stroke-opacity="0.5" stroke-width="0.8"/><path d="M185 37.5 L188 37.5 L188 43 L185.5 43 Z" stroke="none" fill="#d2d2d2" stroke-width="1" fill-rule="evenodd" stroke="#202020" stroke-opacity="0.5" stroke-width="0.8"/><path d="M186 45.5 L190 45 L190.8 62 L187 62 Z" stroke="none" fill="#d2d2d2" stroke-width="1" fill-rule="evenodd" stroke="#202020" stroke-opacity="0.5" stroke-width="0.8"/><path d="M192 29 L197 28.5 L197.8 62 L193 62 Z" stroke="none" fill="#d2d2d2" stroke-width="1" fill-rule="evenodd" stroke="#202020" stroke-opacity="0.5" stroke-width="0.8"/><path d="M199 38 L201.5 38 L201.5 43 L199.3 43 Z" stroke="none" fill="#d2d2d2" stroke-width="1" fill-rule="evenodd" stroke="#202020" stroke-opacity="0.5" stroke-width="0.8"/><path d="M202.5 38 L204.5 38 L204.5 43 L202.5 43 Z" stroke="none" fill="#d2d2d2" stroke-width="1" fill-rule="evenodd" stroke="#202020" stroke-opacity="0.5" stroke-width="0.8"/><path d="M199 45.5 L204 45 L204.6 62 L200 62 Z" stroke="none" fill="#d2d2d2" stroke-width="1" fill-rule="evenodd" stroke="#202020" stroke-opacity="0.5" stroke-width="0.8"/><path d="M206.3 25 L213 24 L214 51.5 Q224 47 231.5 54 Q234 58.5 225 62.5 L214 66 L210.5 65.8 Z M218.3 54.5 L224.8 57 L218.7 60.8 Z" stroke="none" fill="#d2d2d2" stroke-width="1" fill-rule="evenodd" stroke="#202020" stroke-opacity="0.5" stroke-width="0.8"/><path d="M232 45.5 L236.5 45 L237.2 62 L232.5 62 Z" stroke="none" fill="#d2d2d2" stroke-width="1" fill-rule="evenodd" stroke="#202020" stroke-opacity="0.5" stroke-width="0.8"/><path d="M239.3 29 L243.5 28.5 L244.2 62 L239.8 62 Z" stroke="none" fill="#d2d2d2" stroke-width="1" fill-rule="evenodd" stroke="#202020" stroke-opacity="0.5" stroke-width="0.8"/><path d="M247.5 45.5 L252 45 L252.5 62 L248 62 Z" stroke="none" fill="#d2d2d2" stroke-width="1" fill-rule="evenodd" stroke="#202020" stroke-opacity="0.5" stroke-width="0.8"/><path d="M232 38 L236 38 L236 43 L232 43 Z" stroke="none" fill="#d2d2d2" stroke-width="1" fill-rule="evenodd" stroke="#202020" stroke-opacity="0.5" stroke-width="0.8"/><path d="M247.5 38 L251.5 38 L251.5 43 L247.5 43 Z" stroke="none" fill="#d2d2d2" stroke-width="1" fill-rule="evenodd" stroke="#202020" stroke-opacity="0.5" stroke-width="0.8"/></svg></body></html>
